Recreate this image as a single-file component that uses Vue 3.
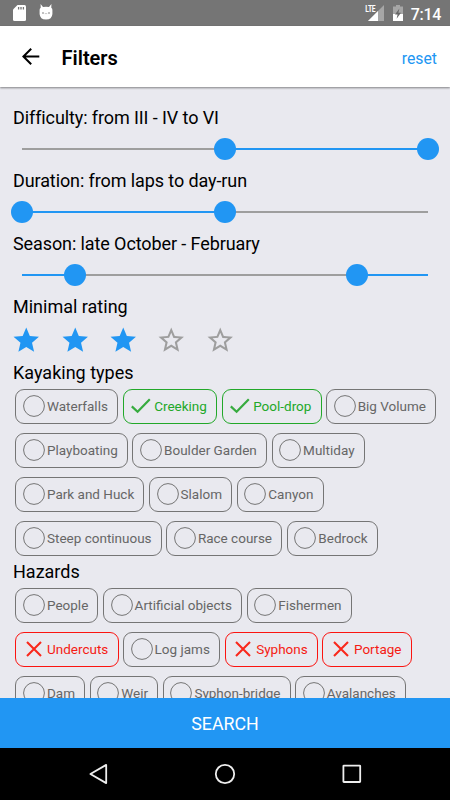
<script setup>
import { ref } from 'vue'

const sliders = ref([
  { label: 'Difficulty: from III - IV to VI', from: 50, to: 100, inverted: false },
  { label: 'Duration: from laps to day-run', from: 0, to: 50, inverted: false },
  // the season wraps over the new year, so the outer parts are selected
  { label: 'Season: late October - February', from: 13, to: 82.6, inverted: true }
])

const rating = ref(3)

const kayakingTypes = ref([
  [{ name: 'Waterfalls' }, { name: 'Creeking', state: 'yes' }, { name: 'Pool-drop', state: 'yes' }, { name: 'Big Volume' }],
  [{ name: 'Playboating' }, { name: 'Boulder Garden' }, { name: 'Multiday' }],
  [{ name: 'Park and Huck' }, { name: 'Slalom' }, { name: 'Canyon' }],
  [{ name: 'Steep continuous' }, { name: 'Race course' }, { name: 'Bedrock' }]
])

const hazards = ref([
  [{ name: 'People' }, { name: 'Artificial objects' }, { name: 'Fishermen' }],
  [{ name: 'Undercuts', state: 'no' }, { name: 'Log jams' }, { name: 'Syphons', state: 'no' }, { name: 'Portage', state: 'no' }],
  [{ name: 'Dam' }, { name: 'Weir' }, { name: 'Syphon-bridge' }, { name: 'Avalanches' }]
])

const toggle = (chip, value) => {
  chip.state = chip.state === value ? undefined : value
}

const reset = () => {
  rating.value = 0
  kayakingTypes.value.flat().forEach((chip) => { chip.state = undefined })
  hazards.value.flat().forEach((chip) => { chip.state = undefined })
}
</script>

<template>
  <div class="screen">
    <div class="status-bar">
      <svg class="sd" width="13" height="16" viewBox="0 0 13 16">
        <path d="M4.5 0H11.5Q13 0 13 1.5V14.5Q13 16 11.5 16H1.5Q0 16 0 14.5V4.5Z" fill="#fff" />
        <path d="M5.6 2V4.6M8 2V4.6M10.4 2V4.6" stroke="#757575" stroke-width="1.3" />
      </svg>
      <svg class="droid" width="14" height="16" viewBox="0 0 14 16">
        <path d="M1.6 0L4 3Q7 2.4 10 3L12.4 0L12.3 3.8Q13.5 4.6 13.4 6V10Q13 15.6 7 15.6Q1 15.6 0.6 10V6Q0.5 4.6 1.7 3.8Z" fill="#fff" />
        <circle cx="4" cy="9" r="0.8" fill="#757575" />
        <circle cx="10" cy="9" r="0.8" fill="#757575" />
        <path d="M5.8 9.6H8.2" stroke="#bbb" stroke-width="0.8" />
      </svg>
      <div class="signal">
        <span class="lte">LTE</span>
        <svg width="16" height="16" viewBox="0 0 16 16">
          <path d="M0 16L16 0V16Z" fill="#a6a6a6" />
          <path d="M0 16L10 6V16Z" fill="#fff" />
        </svg>
      </div>
      <svg class="battery" width="10" height="16" viewBox="0 0 10 16">
        <path d="M3 0H7V1.5H10V16H0V1.5H3Z" fill="#a6a6a6" />
        <path d="M0 9H10V16H0Z" fill="#fff" />
        <path d="M6.4 3.6L2 9.6H4.6L3.6 13.8L8 7.8H5.4Z" fill="#666" />
      </svg>
      <span class="clock">7:14</span>
    </div>

    <header class="toolbar">
      <svg class="back" width="18" height="17" viewBox="0 0 18 17">
        <path d="M17.3 8.5H1.4M9.2 0.8L1.4 8.5L9.2 16.2" fill="none" stroke="#000" stroke-width="2" />
      </svg>
      <h1>Filters</h1>
      <button class="reset" @click="reset">reset</button>
    </header>

    <main class="content">
      <section v-for="slider in sliders" :key="slider.label">
        <h2 class="slider-label">{{ slider.label }}</h2>
        <div class="slider">
          <div class="track" :class="{ inverted: slider.inverted }">
            <div class="range" :style="{ left: slider.from + '%', width: slider.to - slider.from + '%' }"></div>
            <div class="thumb" :style="{ left: slider.from + '%' }"></div>
            <div class="thumb" :style="{ left: slider.to + '%' }"></div>
          </div>
        </div>
      </section>

      <section>
        <h2>Minimal rating</h2>
        <div class="stars">
          <svg v-for="n in 5" :key="n" class="star" viewBox="0 0 24 24" @click="rating = n">
            <path
              v-if="n <= rating"
              d="M12 17.27L18.18 21l-1.64-7.03L22 9.24l-7.19-.61L12 2 9.19 8.63 2 9.24l5.46 4.73L5.82 21z"
              fill="#2196f3"
            />
            <path
              v-else
              d="M22 9.24l-7.19-.62L12 2 9.19 8.63 2 9.24l5.46 4.73L5.82 21 12 17.27 18.18 21l-1.63-7.03L22 9.24zM12 15.4l-3.76 2.27 1-4.28-3.32-2.88 4.38-.38L12 6.1l1.71 4.04 4.38.38-3.32 2.88 1 4.28L12 15.4z"
              fill="#9e9e9e"
            />
          </svg>
        </div>
      </section>

      <section
        v-for="group in [
          { title: 'Kayaking types', rows: kayakingTypes, value: 'yes' },
          { title: 'Hazards', rows: hazards, value: 'no' }
        ]"
        :key="group.title"
      >
        <h2>{{ group.title }}</h2>
        <div class="chips">
          <div v-for="(row, i) in group.rows" :key="i" class="chip-row">
            <div
              v-for="chip in row"
              :key="chip.name"
              class="chip"
              :class="chip.state"
              @click="toggle(chip, group.value)"
            >
              <svg width="24" height="24" viewBox="0 0 24 24">
                <path v-if="chip.state === 'yes'" d="M2.8 12.4L8.6 17.8L20.8 5.2" fill="none" stroke="#37ab3f" stroke-width="2.2" />
                <path v-else-if="chip.state === 'no'" d="M5 5L19 19M19 5L5 19" fill="none" stroke="#f9281c" stroke-width="2.1" />
                <circle v-else cx="12" cy="12" r="10.4" fill="none" stroke="#757575" stroke-width="1" />
              </svg>
              <span>{{ chip.name }}</span>
            </div>
          </div>
        </div>
      </section>
    </main>

    <button class="search">SEARCH</button>

    <nav class="nav-bar">
      <svg width="22" height="22" viewBox="0 0 22 22">
        <path d="M19.2 1.9V20.1L3.4 11Z" />
      </svg>
      <svg width="22" height="22" viewBox="0 0 22 22">
        <circle cx="11" cy="11" r="9.2" />
      </svg>
      <svg width="22" height="22" viewBox="0 0 22 22">
        <rect x="2.4" y="2.6" width="16.8" height="16.4" rx="0.5" />
      </svg>
    </nav>
  </div>
</template>

<style>
body {
  margin: 0;
  overflow: hidden;
}
</style>

<style scoped>
.screen {
  width: 450px;
  height: 800px;
  display: flex;
  flex-direction: column;
  overflow: hidden;
  background: #e9e9ef;
  font-family: Roboto, "Liberation Sans", sans-serif;
}

button {
  border: 0;
  padding: 0;
  background: none;
  font-family: inherit;
}

.status-bar {
  height: 26px;
  flex: none;
  box-sizing: border-box;
  padding: 0 9px 0 13px;
  display: flex;
  align-items: center;
  background: #757575;
  color: #fff;
}

.droid {
  margin: -2px 0 0 13px;
}

.signal {
  margin-left: auto;
  display: flex;
}

.lte {
  width: 10px;
  margin-right: -7px;
  z-index: 1;
  font-size: 9px;
  line-height: 9px;
  font-weight: 700;
  letter-spacing: -0.3px;
  transform: translateX(0.2px) scaleX(0.75);
  transform-origin: left;
}

.battery {
  margin-left: 9px;
}

.clock {
  margin-left: 8px;
  font-size: 16px;
  line-height: 26px;
  font-weight: 500;
  letter-spacing: -0.3px;
  padding-top: 3px;
}

.toolbar {
  height: 61px;
  flex: none;
  box-sizing: border-box;
  padding: 0 13px 0 22px;
  display: flex;
  align-items: center;
  background: #fff;
  box-shadow: 0 1px 2px rgba(0, 0, 0, 0.45);
  z-index: 1;
}

.toolbar h1 {
  margin: 3px 0 0 21.5px;
  font-size: 20px;
  line-height: 24px;
  font-weight: 600;
}

.reset {
  margin: 3px 0 0 auto;
  color: #2196f3;
  font-size: 15.8px;
}

.content {
  flex: 1;
  min-height: 0;
  overflow: hidden;
  padding: 19.5px 0 0 13px;
}

h2 {
  margin: 0;
  height: 22px;
  font-size: 18px;
  line-height: 22px;
  font-weight: 400;
  color: #000;
  white-space: nowrap;
}

.slider-label {
  letter-spacing: -0.1px;
}

.slider {
  height: 41.2px;
  box-sizing: border-box;
  padding: 19px 22px 0 9px;
}

.track {
  position: relative;
  height: 2px;
  background: #9e9e9e;
}

.range {
  position: absolute;
  top: 0;
  height: 2px;
  background: #2196f3;
}

.track.inverted {
  background: #2196f3;
}

.track.inverted .range {
  background: #9e9e9e;
}

.thumb {
  position: absolute;
  top: -10px;
  width: 22px;
  height: 22px;
  margin-left: -11px;
  border-radius: 50%;
  background: #2196f3;
}

.stars {
  height: 44px;
  display: flex;
  align-items: center;
  gap: 17.8px;
  margin-left: -1.7px;
}

.star {
  width: 30.5px;
  height: 30.5px;
}

.chips {
  display: flex;
  flex-direction: column;
  gap: 9px;
  padding: 4.5px 0 5.5px 2.4px;
}

.chip-row {
  display: flex;
  gap: 4.5px;
}

.chip {
  flex: none;
  height: 35px;
  box-sizing: border-box;
  display: flex;
  align-items: center;
  padding: 0 9.2px 0 5.6px;
  border: 1px solid #757575;
  border-radius: 9px;
  color: #666;
  font-size: 13.5px;
  white-space: nowrap;
}

.chip span {
  margin-left: 1px;
}

.chip.yes {
  border-color: #22a829;
  color: #22a829;
}

.chip.no {
  border-color: #fb1410;
  color: #f51b14;
}

.search {
  height: 50px;
  flex: none;
  background: #2196f3;
  color: #fff;
  font-size: 17.8px;
  z-index: 1;
}

.nav-bar {
  height: 52px;
  flex: none;
  box-sizing: border-box;
  padding: 0 87px;
  display: flex;
  align-items: center;
  justify-content: space-between;
  background: #000;
}

.nav-bar svg {
  fill: none;
  stroke: #eee;
  stroke-width: 1.8;
  stroke-linejoin: round;
}
</style>
